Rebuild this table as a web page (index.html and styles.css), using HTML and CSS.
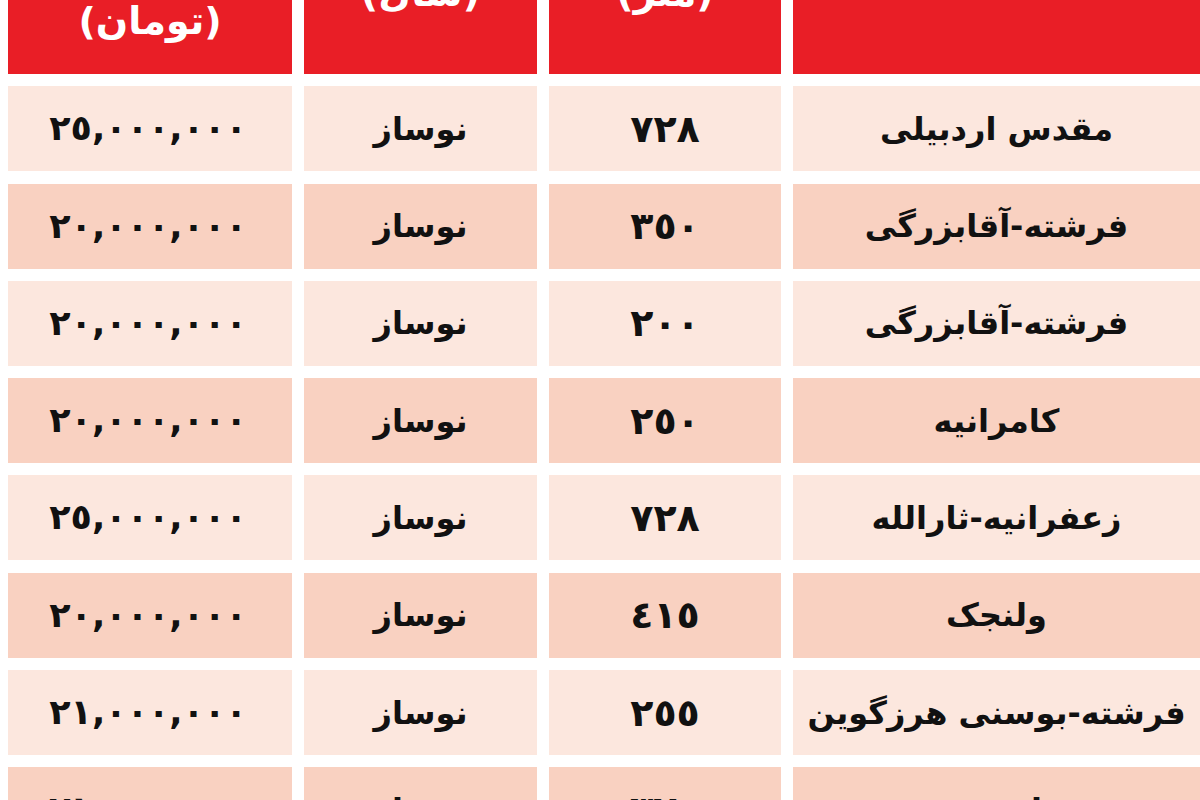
FILE: index.html
```html
<!DOCTYPE html>
<html lang="fa" dir="rtl">
<head>
<meta charset="utf-8">
<title>قیمت آپارتمان</title>
<link rel="stylesheet" href="styles.css">
</head>
<body>
<div class="table">
  <div class="row head">
    <div class="cell area-head"><span>منطقه</span></div>
    <div class="cell"><span>متراژ<br>(متر)</span></div>
    <div class="cell"><span>سن بنا<br>(سال)</span></div>
    <div class="cell price-head"><span>قیمت هر متر<br>(تومان)</span></div>
  </div>
  <div class="row light">
    <div class="cell">مقدس اردبیلی</div>
    <div class="cell num">٧٢٨</div>
    <div class="cell">نوساز</div>
    <div class="cell num price">٢٥,٠٠٠,٠٠٠</div>
  </div>
  <div class="row dark">
    <div class="cell">فرشته-آقابزرگی</div>
    <div class="cell num">٣٥٠</div>
    <div class="cell">نوساز</div>
    <div class="cell num price">٢٠,٠٠٠,٠٠٠</div>
  </div>
  <div class="row light">
    <div class="cell">فرشته-آقابزرگی</div>
    <div class="cell num">٢٠٠</div>
    <div class="cell">نوساز</div>
    <div class="cell num price">٢٠,٠٠٠,٠٠٠</div>
  </div>
  <div class="row dark">
    <div class="cell">کامرانیه</div>
    <div class="cell num">٢٥٠</div>
    <div class="cell">نوساز</div>
    <div class="cell num price">٢٠,٠٠٠,٠٠٠</div>
  </div>
  <div class="row light">
    <div class="cell">زعفرانیه-ثارالله</div>
    <div class="cell num">٧٢٨</div>
    <div class="cell">نوساز</div>
    <div class="cell num price">٢٥,٠٠٠,٠٠٠</div>
  </div>
  <div class="row dark">
    <div class="cell">ولنجک</div>
    <div class="cell num">٤١٥</div>
    <div class="cell">نوساز</div>
    <div class="cell num price">٢٠,٠٠٠,٠٠٠</div>
  </div>
  <div class="row light">
    <div class="cell">فرشته-بوسنی هرزگوین</div>
    <div class="cell num">٢٥٥</div>
    <div class="cell">نوساز</div>
    <div class="cell num price">٢١,٠٠٠,٠٠٠</div>
  </div>
  <div class="row dark">
    <div class="cell">زعفرانیه-مقدس</div>
    <div class="cell num">٣٢٠</div>
    <div class="cell">نوساز</div>
    <div class="cell num price">٢١,٠٠٠,٠٠٠</div>
  </div>
</div>
</body>
</html>
```
FILE: styles.css
```css
html, body {
  margin: 0;
  padding: 0;
  background: #ffffff;
  overflow: hidden;
  height: 800px;
}

body {
  font-family: "DejaVu Sans", "Noto Sans", sans-serif;
  font-weight: bold;
  color: #111111;
}

.table {
  display: grid;
  grid-template-columns: 407px 232px 233px 284px;
  grid-template-rows: 74px;
  grid-auto-rows: 85px;
  column-gap: 12px;
  row-gap: 12.3px;
  padding-left: 8px;
  direction: rtl;
}

.row {
  display: contents;
}

.cell {
  display: flex;
  align-items: center;
  justify-content: center;
  font-size: 32px;
  line-height: 1;
  white-space: nowrap;
  min-height: 0;
}

.light .cell {
  background: #fce7de;
}

.dark .cell {
  background: #f9d1c1;
}

.head .cell {
  background: #e91e26;
  color: #ffffff;
  overflow: hidden;
  flex-direction: column;
  justify-content: flex-end;
  align-items: center;
  font-size: 38px;
  line-height: 46px;
  text-align: center;
}

.head .cell span {
  margin-bottom: 58px;
}

.head .area-head span {
  margin-bottom: 120px;
}

.head .price-head span {
  margin-bottom: 30px;
}

.num {
  font-size: 38px;
  letter-spacing: 3px;
}

.price {
  font-size: 35px;
  letter-spacing: 3px;
  padding-right: 4px;
}
```
